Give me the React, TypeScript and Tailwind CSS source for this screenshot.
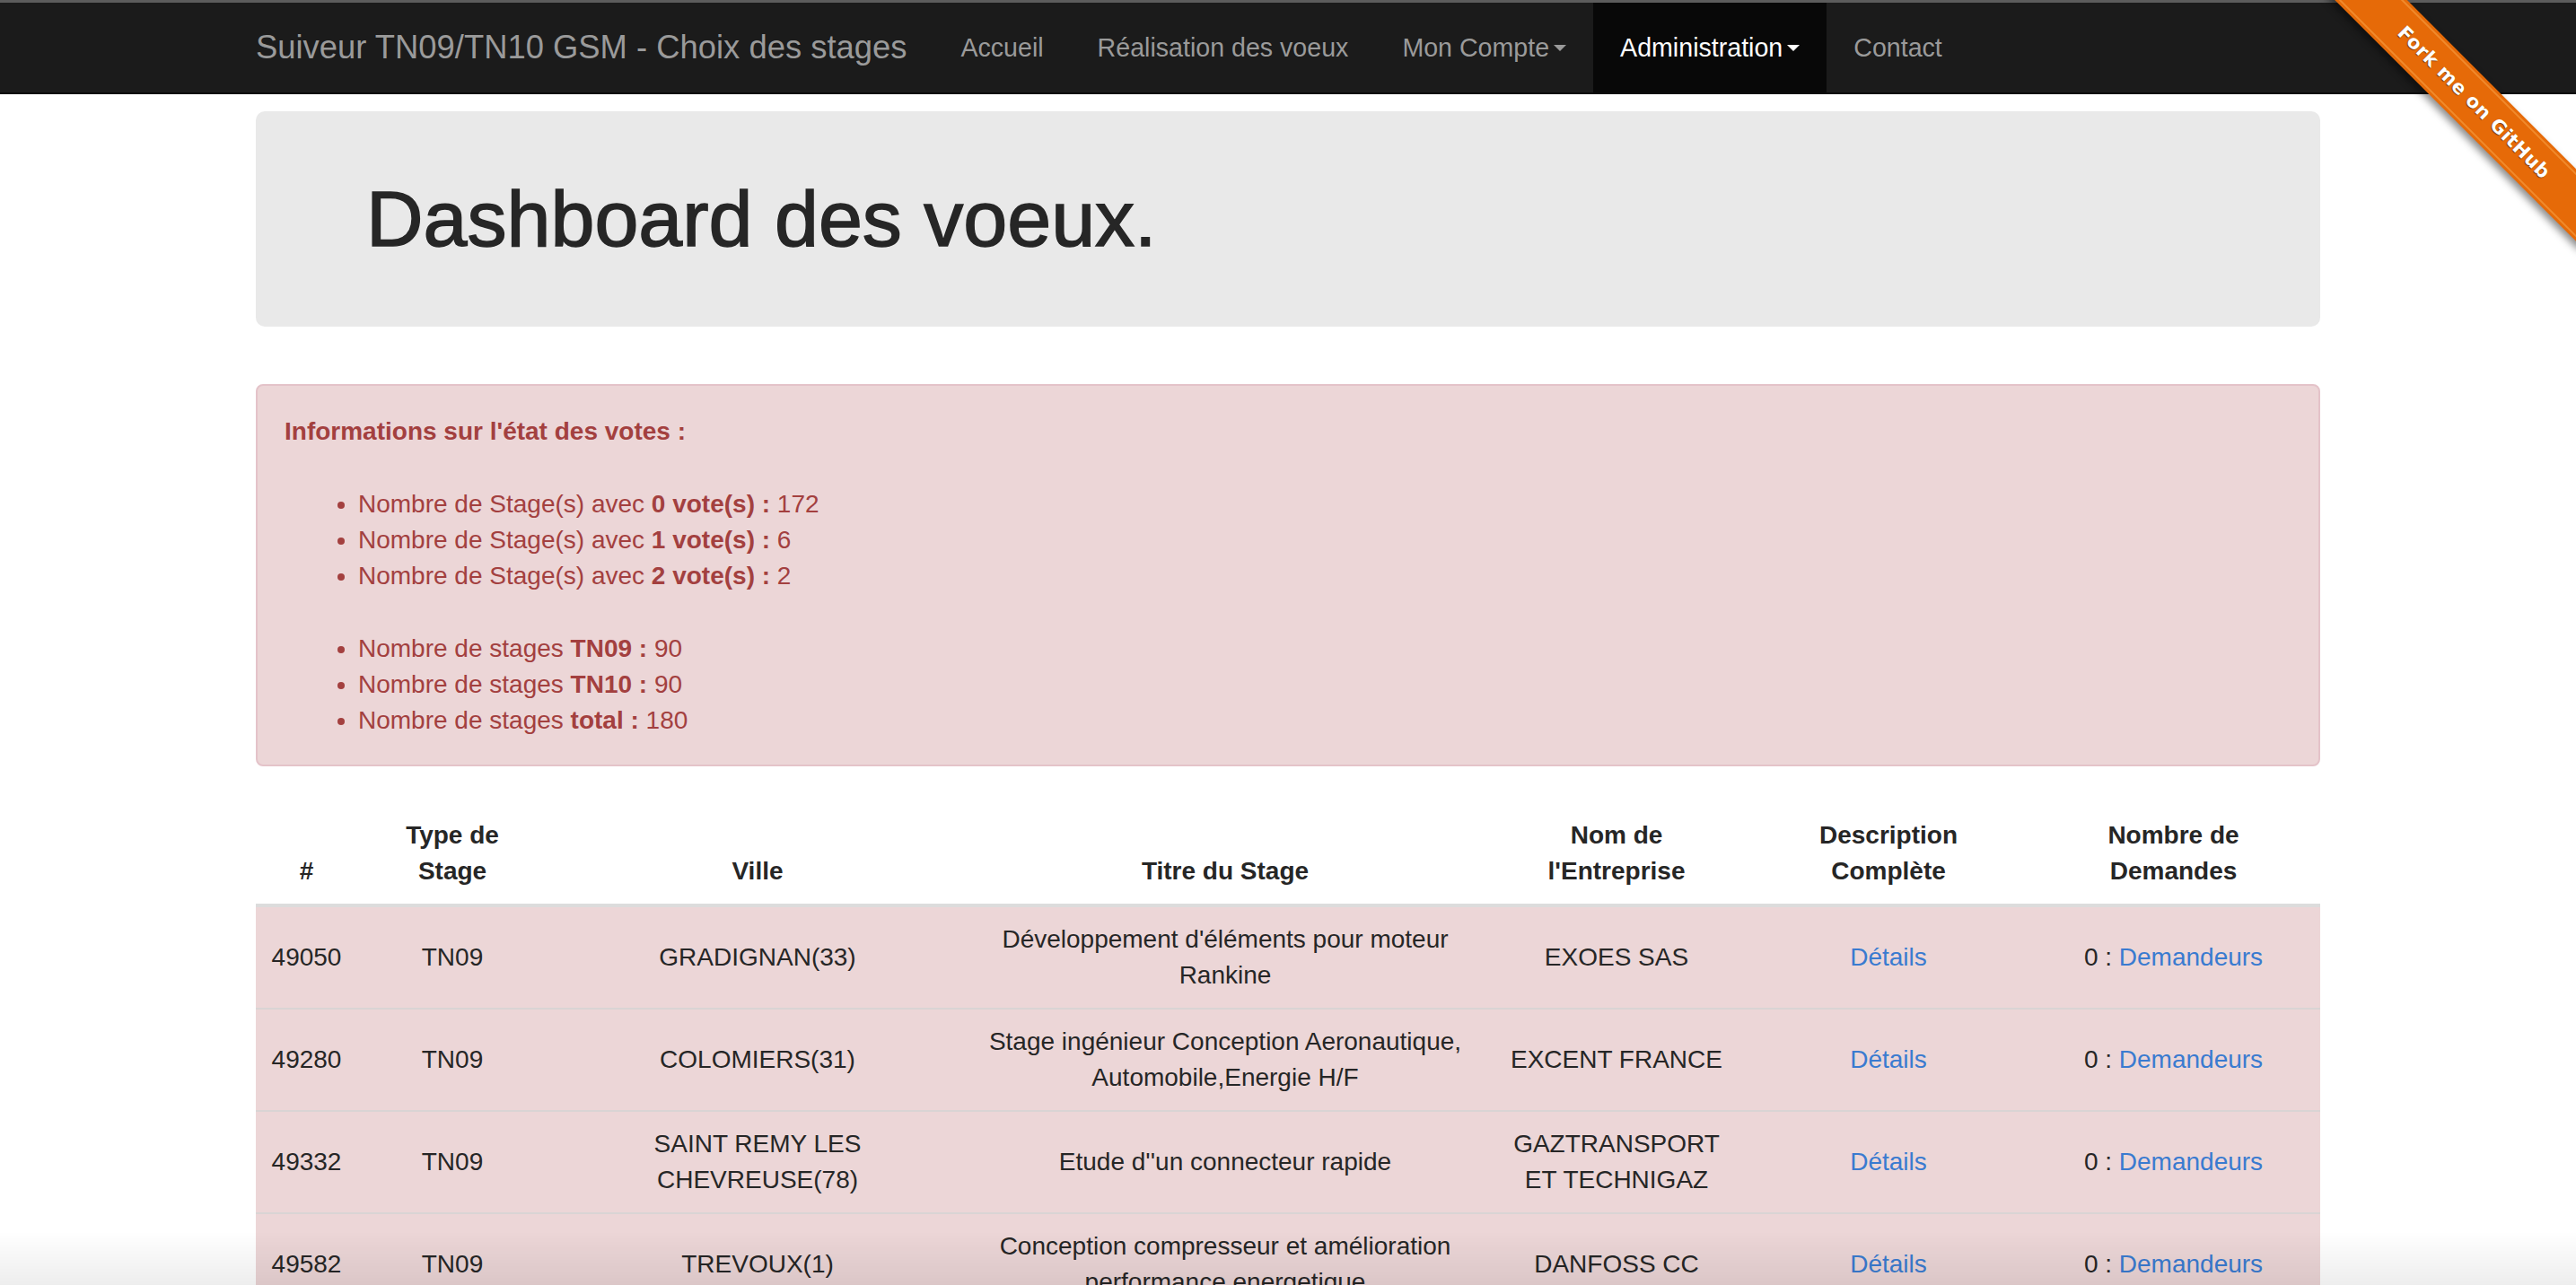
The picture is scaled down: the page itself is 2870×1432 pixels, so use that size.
import React from 'react';

type Row = {
  id: string;
  type: string;
  ville: string[];
  titre: string[];
  entreprise: string[];
  demandes: number;
};

const rows: Row[] = [
  {
    id: '49050',
    type: 'TN09',
    ville: ['GRADIGNAN(33)'],
    titre: ["Développement d'éléments pour moteur", 'Rankine'],
    entreprise: ['EXOES SAS'],
    demandes: 0,
  },
  {
    id: '49280',
    type: 'TN09',
    ville: ['COLOMIERS(31)'],
    titre: ['Stage ingénieur Conception Aeronautique,', 'Automobile,Energie H/F'],
    entreprise: ['EXCENT FRANCE'],
    demandes: 0,
  },
  {
    id: '49332',
    type: 'TN09',
    ville: ['SAINT REMY LES', 'CHEVREUSE(78)'],
    titre: ["Etude d''un connecteur rapide"],
    entreprise: ['GAZTRANSPORT', 'ET TECHNIGAZ'],
    demandes: 0,
  },
  {
    id: '49582',
    type: 'TN09',
    ville: ['TREVOUX(1)'],
    titre: ['Conception compresseur et amélioration', 'performance energetique'],
    entreprise: ['DANFOSS CC'],
    demandes: 0,
  },
  {
    id: '49601',
    type: 'TN09',
    ville: ['TOULOUSE(31)'],
    titre: ['Etude thermique'],
    entreprise: ['AIRBUS'],
    demandes: 0,
  },
];

const navItems = [
  { label: 'Accueil' },
  { label: 'Réalisation des voeux' },
  { label: 'Mon Compte', caret: true },
  { label: 'Administration', caret: true, active: true },
  { label: 'Contact' },
];

function Lines({ lines }: { lines: string[] }) {
  return (
    <>
      {lines.map((l) => (
        <span key={l} className="block whitespace-nowrap">
          {l}
        </span>
      ))}
    </>
  );
}

function Caret() {
  return (
    <span className="ml-[5px] inline-block h-0 w-0 border-x-[7px] border-t-[7px] border-x-transparent border-t-current align-middle" />
  );
}

function ForkRibbon() {
  return (
    <div className="pointer-events-none absolute right-0 top-0 z-20 h-[300px] w-[300px] overflow-hidden">
      <div className="absolute left-[-14px] top-[86px] flex h-[57px] w-[400px] rotate-45 items-center justify-center bg-[#e66a08] shadow-[0_5px_8px_rgba(0,0,0,0.45)]">
        <div className="absolute inset-x-0 top-[3px] h-[2px] bg-[#f08a2c]" />
        <div className="absolute inset-x-0 bottom-[3px] h-[2px] bg-[#f08a2c]" />
        <span className="font-['DejaVu_Sans',sans-serif] text-[21px] font-bold tracking-[0.5px] text-white [text-shadow:0_1px_1px_rgba(0,0,0,0.5)]">
          Fork me on GitHub
        </span>
      </div>
    </div>
  );
}

export default function App() {
  return (
    <div className="relative min-h-screen bg-white font-['Liberation_Sans',Arial,Helvetica,sans-serif] text-[#262626]">
      <ForkRibbon />

      {/* Navbar */}
      <nav className="border-t-[3px] border-b-2 border-t-[#5c5c5c] border-b-[#0a0a0a] bg-[#1b1b1b]">
        <div className="mx-auto flex h-[100px] w-[2300px]">
          <a className="-ml-[30px] flex items-center px-[30px] text-[36.4px] text-[#9a9a9a]">
            Suiveur TN09/TN10 GSM - Choix des stages
          </a>
          <ul className="flex">
            {navItems.map((item) => (
              <li key={item.label}>
                <a
                  className={
                    item.active
                      ? 'flex h-full items-center bg-[#080808] px-[30px] text-[28.6px] text-white'
                      : 'flex h-full items-center px-[30px] text-[28.6px] text-[#9a9a9a]'
                  }
                >
                  {item.label}
                  {item.caret && <Caret />}
                </a>
              </li>
            ))}
          </ul>
        </div>
      </nav>

      <div className="mx-auto w-[2300px]">
        {/* Jumbotron */}
        <div className="mt-[19px] flex h-[240px] items-center rounded-[10px] bg-[#e9e9e9] pl-[123px]">
          <h1 className="text-[88px] font-medium leading-none text-[#262626] [-webkit-text-stroke:1.5px_#262626]">
            Dashboard des voeux.
          </h1>
        </div>

        {/* Alert */}
        <div className="mt-[64px] rounded-[8px] border-2 border-[#e4c3c9] bg-[#ecd6d7] px-[30px] pb-[29px] pt-[31px] text-[28px] leading-[40px] text-[#a3403f]">
          <p className="font-bold">Informations sur l'état des votes :</p>
          <ul className="mt-[41px] list-disc pl-[82px]">
            <li>
              Nombre de Stage(s) avec <b>0 vote(s) :</b> 172
            </li>
            <li>
              Nombre de Stage(s) avec <b>1 vote(s) :</b> 6
            </li>
            <li>
              Nombre de Stage(s) avec <b>2 vote(s) :</b> 2
            </li>
          </ul>
          <ul className="mt-[41px] list-disc pl-[82px]">
            <li>
              Nombre de stages <b>TN09 :</b> 90
            </li>
            <li>
              Nombre de stages <b>TN10 :</b> 90
            </li>
            <li>
              Nombre de stages <b>total :</b> 180
            </li>
          </ul>
        </div>

        {/* Table */}
        <table className="mt-[41px] w-full table-fixed border-collapse text-[28px] leading-[40px]">
          <colgroup>
            <col className="w-[113px]" />
            <col className="w-[212px]" />
            <col className="w-[468px]" />
            <col className="w-[574px]" />
            <col className="w-[298px]" />
            <col className="w-[308px]" />
            <col className="w-[327px]" />
          </colgroup>
          <thead>
            <tr className="border-b-4 border-[#dcdcdc] text-center align-bottom font-bold">
              <th className="p-[16px]">#</th>
              <th className="p-[16px]">
                <Lines lines={['Type de', 'Stage']} />
              </th>
              <th className="p-[16px]">Ville</th>
              <th className="p-[16px]">Titre du Stage</th>
              <th className="p-[16px]">
                <Lines lines={['Nom de', "l'Entreprise"]} />
              </th>
              <th className="p-[16px]">
                <Lines lines={['Description', 'Complète']} />
              </th>
              <th className="p-[16px]">
                <Lines lines={['Nombre de', 'Demandes']} />
              </th>
            </tr>
          </thead>
          <tbody>
            {rows.map((r) => (
              <tr key={r.id} className="border-t-2 border-[#d9d4d4] bg-[#ecd6d7] text-center align-middle">
                <td className="p-[16px]">{r.id}</td>
                <td className="p-[16px]">{r.type}</td>
                <td className="p-[16px]">
                  <Lines lines={r.ville} />
                </td>
                <td className="p-[16px]">
                  <Lines lines={r.titre} />
                </td>
                <td className="p-[16px]">
                  <Lines lines={r.entreprise} />
                </td>
                <td className="p-[16px]">
                  <a className="text-[#3a7bd0]">Détails</a>
                </td>
                <td className="p-[16px]">
                  {r.demandes} : <a className="text-[#3a7bd0]">Demandeurs</a>
                </td>
              </tr>
            ))}
          </tbody>
        </table>
      </div>

      {/* window shadow at the bottom edge */}
      <div className="pointer-events-none fixed inset-x-0 bottom-0 z-10 h-[60px] bg-linear-to-b from-transparent to-black/[0.07]" />
    </div>
  );
}
